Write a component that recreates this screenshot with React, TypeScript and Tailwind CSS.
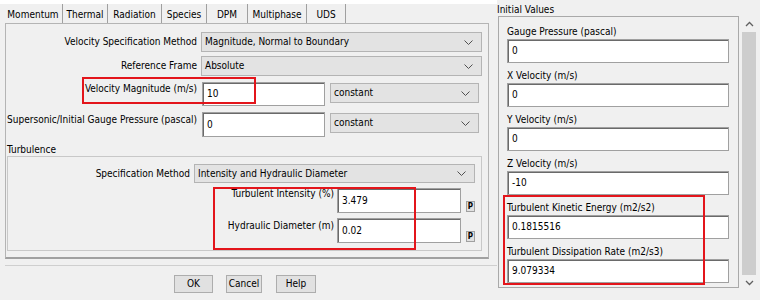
import React from "react";

function Chevron() {
  return (
    <svg width="9" height="5" viewBox="0 0 9 5" className="shrink-0">
      <polyline points="0.5,0.5 4.5,4.5 8.5,0.5" fill="none" stroke="#505050" strokeWidth="1" />
    </svg>
  );
}

function Combo({ className, text }: { className: string; text: string }) {
  return (
    <div
      className={`flex items-center justify-between border border-[#b4b4b4] bg-[#e3e3e3] pl-[3px] pr-[8px] ${className}`}
    >
      <span>{text}</span>
      <Chevron />
    </div>
  );
}

function Field({ className, value }: { className: string; value: string }) {
  return (
    <div
      className={`flex items-center bg-white border border-[#a0a0a0] shadow-[inset_1px_1px_0_#6a6a6a] pl-[4px] ${className}`}
    >
      {value}
    </div>
  );
}

function PBtn() {
  return (
    <div className="ml-[5px] mt-[13px] w-[9px] h-[11px] border border-[#a0a0a0] bg-[#e1e1e1] flex items-center justify-center text-[8px] font-bold">
      P
    </div>
  );
}

function Btn({ className, text }: { className: string; text: string }) {
  return (
    <div
      className={`h-[18px] border border-[#adadad] bg-[#e1e1e1] flex items-center justify-center ${className}`}
    >
      {text}
    </div>
  );
}

const tabs: { name: string; w: string }[] = [
  { name: "Momentum", w: "w-[59px]" },
  { name: "Thermal", w: "w-[45px]" },
  { name: "Radiation", w: "w-[54px]" },
  { name: "Species", w: "w-[45px]" },
  { name: "DPM", w: "w-[41px]" },
  { name: "Multiphase", w: "w-[59px]" },
  { name: "UDS", w: "w-[39px]" },
];

const initial: { label: string; value: string }[] = [
  { label: "Gauge Pressure (pascal)", value: "0" },
  { label: "X Velocity (m/s)", value: "0" },
  { label: "Y Velocity (m/s)", value: "0" },
  { label: "Z Velocity (m/s)", value: "-10" },
  { label: "Turbulent Kinetic Energy (m2/s2)", value: "0.1815516" },
  { label: "Turbulent Dissipation Rate (m2/s3)", value: "9.079334" },
];

export default function App() {
  return (
    <div className="relative w-[760px] h-[300px] overflow-hidden bg-[#f0f0f0] flex text-[10px] leading-none text-black [font-family:'DejaVu_Sans_Condensed','Liberation_Sans',sans-serif]">
      {/* Left column */}
      <div className="w-[497px] shrink-0 flex flex-col">
        <div className="h-[4px] bg-white" />
        <div className="h-[19px] flex pl-[4px]">
          {tabs.map((t) => (
            <div
              key={t.name}
              className={`${t.w} h-full flex items-center justify-center pt-[3px] border-r border-[#a0a0a0]`}
            >
              {t.name}
            </div>
          ))}
        </div>
        {/* tab panel */}
        <div className="ml-[5px] w-[484px] h-[236px] border border-[#b4b4b4] border-b-2 border-b-[#a0a0a0] flex flex-col">
          <div className="mt-[8px] flex h-[20px]">
            <div className="w-[191px] text-right flex items-center justify-end">Velocity Specification Method</div>
            <Combo className="ml-[4px] w-[281px] h-[20px]" text="Magnitude, Normal to Boundary" />
          </div>
          <div className="mt-[4px] flex h-[20px]">
            <div className="w-[191px] text-right flex items-center justify-end">Reference Frame</div>
            <Combo className="ml-[4px] w-[281px] h-[20px]" text="Absolute" />
          </div>
          <div className="mt-[6px] flex items-start h-[24px]">
            <div className="w-[191px] text-right pt-[2px]">Velocity Magnitude (m/s)</div>
            <Field className="ml-[5px] w-[123px] h-[24px]" value="10" />
            <Combo className="ml-[5px] mt-[1px] w-[149px] h-[20px]" text="constant" />
          </div>
          <div className="mt-[6px] flex items-start h-[25px]">
            <div className="w-[191px] text-right pt-[3px]">Supersonic/Initial Gauge Pressure (pascal)</div>
            <Field className="ml-[5px] w-[123px] h-[25px]" value="0" />
            <Combo className="ml-[5px] mt-[1px] w-[149px] h-[20px]" text="constant" />
          </div>
          <div className="mt-[8px] ml-[1px] h-[10px]">Turbulence</div>
          <div className="mt-[1px] ml-[1px] w-[475px] h-[95px] border border-[#c8c8c8] flex flex-col">
            <div className="mt-[7px] flex h-[19px]">
              <div className="w-[182px] text-right flex items-center justify-end">Specification Method</div>
              <Combo className="ml-[4px] w-[281px] h-[19px]" text="Intensity and Hydraulic Diameter" />
            </div>
            <div className="mt-[5px] flex items-start h-[25px]">
              <div className="w-[326px] text-right pt-[1px]">Turbulent Intensity (%)</div>
              <Field className="ml-[3px] w-[124px] h-[25px]" value="3.479" />
              <PBtn />
            </div>
            <div className="mt-[5px] flex items-start h-[25px]">
              <div className="w-[326px] text-right pt-[3px]">Hydraulic Diameter (m)</div>
              <Field className="ml-[3px] w-[124px] h-[25px]" value="0.02" />
              <PBtn />
            </div>
          </div>
        </div>
        <div className="mt-[6px] ml-[5px] h-[1px] w-[492px] bg-[#cfcfcf]" />
        <div className="mt-[9px] flex">
          <Btn className="ml-[174px] w-[39px]" text="OK" />
          <Btn className="ml-[13px] w-[36px]" text="Cancel" />
          <Btn className="ml-[14px] w-[40px]" text="Help" />
        </div>
      </div>

      {/* Right column */}
      <div className="flex-1 flex flex-col">
        <div className="pt-[5px] h-[16px]">Initial Values</div>
        <div className="flex">
          <div className="ml-[1px] w-[241px] h-[272px] border border-[#a9a9a9] flex flex-col pl-[8px] pt-[10px]">
            {initial.map((f, i) => (
              <div key={f.label} className={i === 0 ? "flex flex-col" : "flex flex-col mt-[8px]"}>
                <div className="h-[10px]">{f.label}</div>
                <Field className="mt-[2px] w-[222px] h-[24px]" value={f.value} />
              </div>
            ))}
          </div>
          {/* scrollbar */}
          <div className="ml-[1px] w-[18px] flex flex-col items-center">
            <svg width="9" height="6" viewBox="0 0 9 6" className="mt-[5px]">
              <polyline points="1,5 4.5,1.5 8,5" fill="none" stroke="#606060" strokeWidth="1.3" />
            </svg>
            <div className="mt-[5px] ml-[-1px] w-[14px] h-[243px] bg-[#cdcdcd]" />
            <svg width="9" height="6" viewBox="0 0 9 6" className="mt-[5px]">
              <polyline points="1,1 4.5,4.5 8,1" fill="none" stroke="#606060" strokeWidth="1.3" />
            </svg>
          </div>
        </div>
      </div>

      {/* red annotation boxes */}
      <div className="absolute left-[82px] top-[77px] w-[174px] h-[27px] border-2 border-[#e3151b]" />
      <div className="absolute left-[213px] top-[187px] w-[203px] h-[63px] border-2 border-[#e3151b]" />
      <div className="absolute left-[503px] top-[195px] w-[202px] h-[90px] border-2 border-[#e3151b]" />
    </div>
  );
}
